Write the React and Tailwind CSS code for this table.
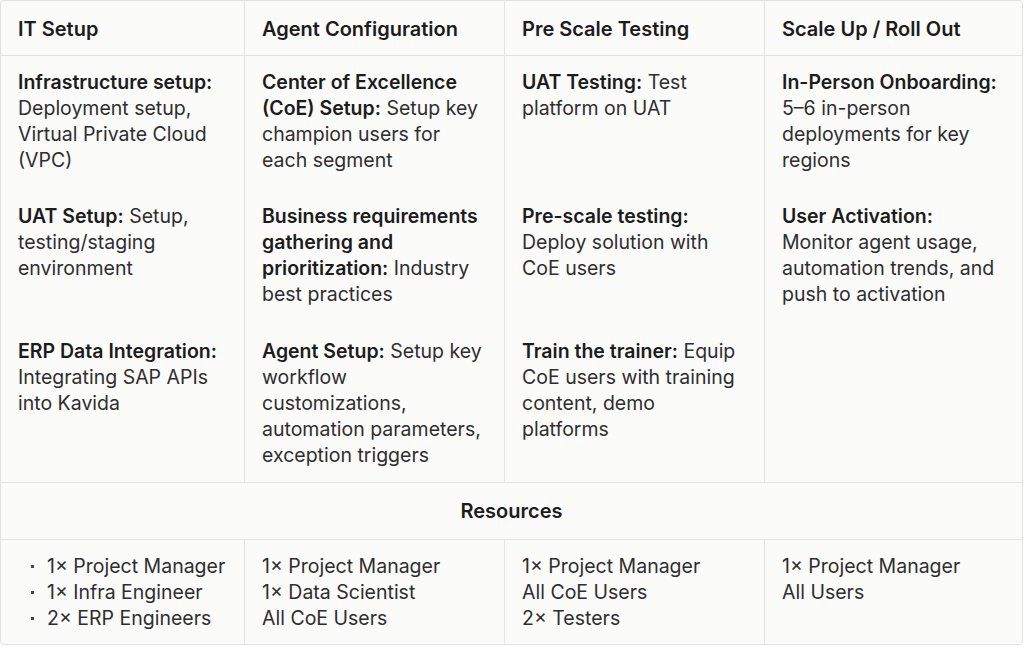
import React from 'react';

const PHASES = [
  {
    title: 'IT Setup',
    items: [
      { label: 'Infrastructure setup:', text: 'Deployment setup, Virtual Private Cloud (VPC)' },
      { label: 'UAT Setup:', text: 'Setup, testing/staging environment' },
      { label: 'ERP Data Integration:', text: 'Integrating SAP APIs into Kavida' },
    ],
    resources: ['1× Project Manager', '1× Infra Engineer', '2× ERP Engineers'],
    bullets: true,
  },
  {
    title: 'Agent Configuration',
    items: [
      { label: 'Center of Excellence (CoE) Setup:', text: 'Setup key champion users for each segment' },
      { label: 'Business requirements gathering and prioritization:', text: 'Industry best practices' },
      { label: 'Agent Setup:', text: 'Setup key workflow customizations, automation parameters, exception triggers' },
    ],
    resources: ['1× Project Manager', '1× Data Scientist', 'All CoE Users'],
  },
  {
    title: 'Pre Scale Testing',
    items: [
      { label: 'UAT Testing:', text: 'Test platform on UAT' },
      { label: 'Pre-scale testing:', text: 'Deploy solution with CoE users' },
      { label: 'Train the trainer:', text: 'Equip CoE users with training content, demo platforms' },
    ],
    resources: ['1× Project Manager', 'All CoE Users', '2× Testers'],
  },
  {
    title: 'Scale Up / Roll Out',
    items: [
      { label: 'In-Person Onboarding:', text: '5–6 in-person deployments for key regions' },
      { label: 'User Activation:', text: 'Monitor agent usage, automation trends, and push to activation' },
    ],
    resources: ['1× Project Manager', 'All Users'],
  },
];

const COLS = 'grid grid-cols-[244px_260px_260px_1fr]';
const cellBorder = (i) => (i < 3 ? 'border-r border-[#e4e4e2]' : '');

// step rows are aligned across phases, so each step index is its own grid row
const STEP_PAD = ['pt-[13px] pb-[15px]', 'pt-[15px] pb-[16px]', 'pt-[15px] pb-[14px]'];

export default function App() {
  return (
    <div
      className="w-[1024px] h-[646px] bg-white text-[19.5px] leading-[26px] text-[#2e2e2e]"
      style={{ fontFamily: 'Inter, "Noto Sans", sans-serif' }}
    >
      <div className="w-[1023px] h-[645px] bg-[#fbfbfa] border border-[#e2e2e0] rounded-[4px] overflow-hidden flex flex-col">
        {/* Phase headers */}
        <div className={`${COLS} border-b border-[#e4e4e2]`}>
          {PHASES.map((p, i) => (
            <div key={p.title} className={`h-[54px] flex items-center pl-[17px] pt-[1px] text-[20px] font-semibold text-[#1c1c1c] ${cellBorder(i)}`}>
              {p.title}
            </div>
          ))}
        </div>

        {/* Phase steps */}
        <div className="border-b border-[#e4e4e2]">
          {[0, 1, 2].map((row) => (
            <div key={row} className={COLS}>
              {PHASES.map((p, i) => {
                const it = p.items[row];
                return (
                  <div key={p.title} className={`pl-[17px] pr-[17px] ${STEP_PAD[row]} ${cellBorder(i)}`}>
                    {it && (
                      <p>
                        <span className="font-semibold text-[#1c1c1c]">{it.label}</span> {it.text}
                      </p>
                    )}
                  </div>
                );
              })}
            </div>
          ))}
        </div>

        {/* Resources title */}
        <div className="h-[57px] flex items-center justify-center text-[20px] font-semibold text-[#1c1c1c] border-b border-[#e4e4e2]">
          Resources
        </div>

        {/* Resources per phase */}
        <div className={`${COLS} flex-1`}>
          {PHASES.map((p, i) => (
            <div key={p.title} className={`pt-[13px] ${p.bullets ? 'pl-[30px]' : 'pl-[17px]'} ${cellBorder(i)}`}>
              {p.resources.map((r) => (
                <div key={r} className="flex items-center">
                  {p.bullets && <span className="w-[3px] h-[3px] bg-[#444] mr-[13px]" />}
                  {r}
                </div>
              ))}
            </div>
          ))}
        </div>
      </div>
    </div>
  );
}
